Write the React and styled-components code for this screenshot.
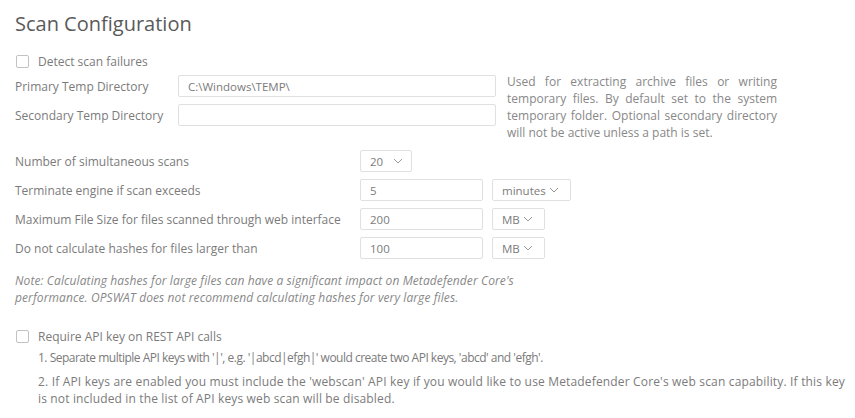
import React from 'react'
import styled, { createGlobalStyle } from 'styled-components'

const Global = createGlobalStyle`
	html, body {
		margin: 0;
		padding: 0;
		background: #fff;
	}
	body {
		font-family: "Open Sans", "DejaVu Sans", sans-serif;
		color: #7b7b7b;
		font-size: 12px;
	}
`

const Page = styled.div`
	width: 855px;
	height: 418px;
	overflow: hidden;
	padding: 10px 0 0 15px;
	box-sizing: border-box;
`

const Title = styled.h1`
	font-size: 20px;
	font-weight: 400;
	color: #5a5a5a;
	margin: 0 0 15px 0;
	line-height: 28px;
`

const CheckRow = styled.label`
	display: flex;
	align-items: center;
	gap: 9px;
	height: 16px;
	margin-bottom: ${p => p.$mb || 0}px;
	padding-left: 1px;
`

const Box = styled.span`
	width: 11px;
	height: 11px;
	border: 1px solid #c2c2c2;
	border-radius: 2px;
	background: #fff;
`

const DirBlock = styled.div`
	display: flex;
	align-items: flex-start;
	gap: 11px;
`

const DirFields = styled.div`
	display: flex;
	flex-direction: column;
	gap: 7px;
	padding-top: 2px;
`

const FieldRow = styled.div`
	display: flex;
	align-items: center;
`

const Label = styled.span`
	width: ${p => p.$w}px;
	flex-shrink: 0;
	line-height: 21px;
`

const Input = styled.div`
	width: ${p => p.$w}px;
	height: 20px;
	border: 1px solid #e0e0e0;
	border-radius: 2px;
	display: flex;
	align-items: center;
	padding-left: ${p => p.$pl || 9}px;
	color: #7b7b7b;
	font-size: 11.5px;
`

const Help = styled.p`
	width: 270px;
	margin: 0;
	text-align: justify;
	line-height: 17px;
	color: #888;
	font-size: 12px;
`

const Settings = styled.div`
	display: flex;
	flex-direction: column;
	gap: 7px;
	margin-top: 9px;
`

const Controls = styled.div`
	display: flex;
	gap: 9px;
`

const Select = styled.div`
	height: 20px;
	border: 1px solid #e0e0e0;
	border-radius: 2px;
	display: flex;
	align-items: center;
	gap: ${p => p.$gap || 4}px;
	padding: 0 ${p => p.$pr || 11}px 0 ${p => p.$pl || 9}px;
	color: #7b7b7b;
	font-size: 11.5px;
`

const Note = styled.p`
	margin: 13px 0 0 0;
	font-style: italic;
	line-height: 17px;
	color: #888;
	font-size: 12px;
	width: 515px;
	letter-spacing: 0.1px;
`

const ApiBlock = styled.div`
	margin-top: 22px;
`

const ApiList = styled.div`
	padding-left: 23px;
	margin-top: 5px;
	width: 807px;
	font-size: 12px;
	line-height: 17px;
`

const ApiItem = styled.p`
	margin: 0 0 7px 0;
	letter-spacing: ${p => p.$ls}px;
	text-align: ${p => (p.$justify ? 'justify' : 'left')};
`

const Chevron = () => (
	<svg width="10" height="6" viewBox="0 0 10 6">
		<path d="M1 1 L5 5 L9 1" fill="none" stroke="#999" strokeWidth="1" />
	</svg>
)

export default function App() {
	return (
		<Page>
			<Global />
			<Title>Scan Configuration</Title>
			<CheckRow $mb={4}>
				<Box />
				Detect scan failures
			</CheckRow>
			<DirBlock>
				<DirFields>
					<FieldRow>
						<Label $w={163}>Primary Temp Directory</Label>
						<Input $w={307}>C:\Windows\TEMP\</Input>
					</FieldRow>
					<FieldRow>
						<Label $w={163}>Secondary Temp Directory</Label>
						<Input $w={307}></Input>
					</FieldRow>
				</DirFields>
				<Help>
					Used for extracting archive files or writing temporary files. By default set to the system
					temporary folder. Optional secondary directory will not be active unless a path is set.
				</Help>
			</DirBlock>
			<Settings>
				<FieldRow>
					<Label $w={345}>Number of simultaneous scans</Label>
					<Select $gap={10} $pr={8}>20 <Chevron /></Select>
				</FieldRow>
				<FieldRow>
					<Label $w={345}>Terminate engine if scan exceeds</Label>
					<Controls>
						<Input $w={112}>5</Input>
						<Select $gap={3}>minutes <Chevron /></Select>
					</Controls>
				</FieldRow>
				<FieldRow>
					<Label $w={345}>Maximum File Size for files scanned through web interface</Label>
					<Controls>
						<Input $w={112}>200</Input>
						<Select $gap={3}>MB <Chevron /></Select>
					</Controls>
				</FieldRow>
				<FieldRow>
					<Label $w={345}>Do not calculate hashes for files larger than</Label>
					<Controls>
						<Input $w={112}>100</Input>
						<Select $gap={3}>MB <Chevron /></Select>
					</Controls>
				</FieldRow>
			</Settings>
			<Note>
				Note: Calculating hashes for large files can have a significant impact on Metadefender Core's
				performance. OPSWAT does not recommend calculating hashes for very large files.
			</Note>
			<ApiBlock>
				<CheckRow>
					<Box />
					Require API key on REST API calls
				</CheckRow>
				<ApiList>
					<ApiItem $ls={-0.5}>
						1. Separate multiple API keys with '|', e.g. '|abcd|efgh|' would create two API keys, 'abcd' and 'efgh'.
					</ApiItem>
					<ApiItem $ls={0.15} $justify>
						2. If API keys are enabled you must include the 'webscan' API key if you would like to use Metadefender Core's web scan capability. If this key is not included in the list of API keys web scan will be disabled.
					</ApiItem>
				</ApiList>
			</ApiBlock>
		</Page>
	)
}
